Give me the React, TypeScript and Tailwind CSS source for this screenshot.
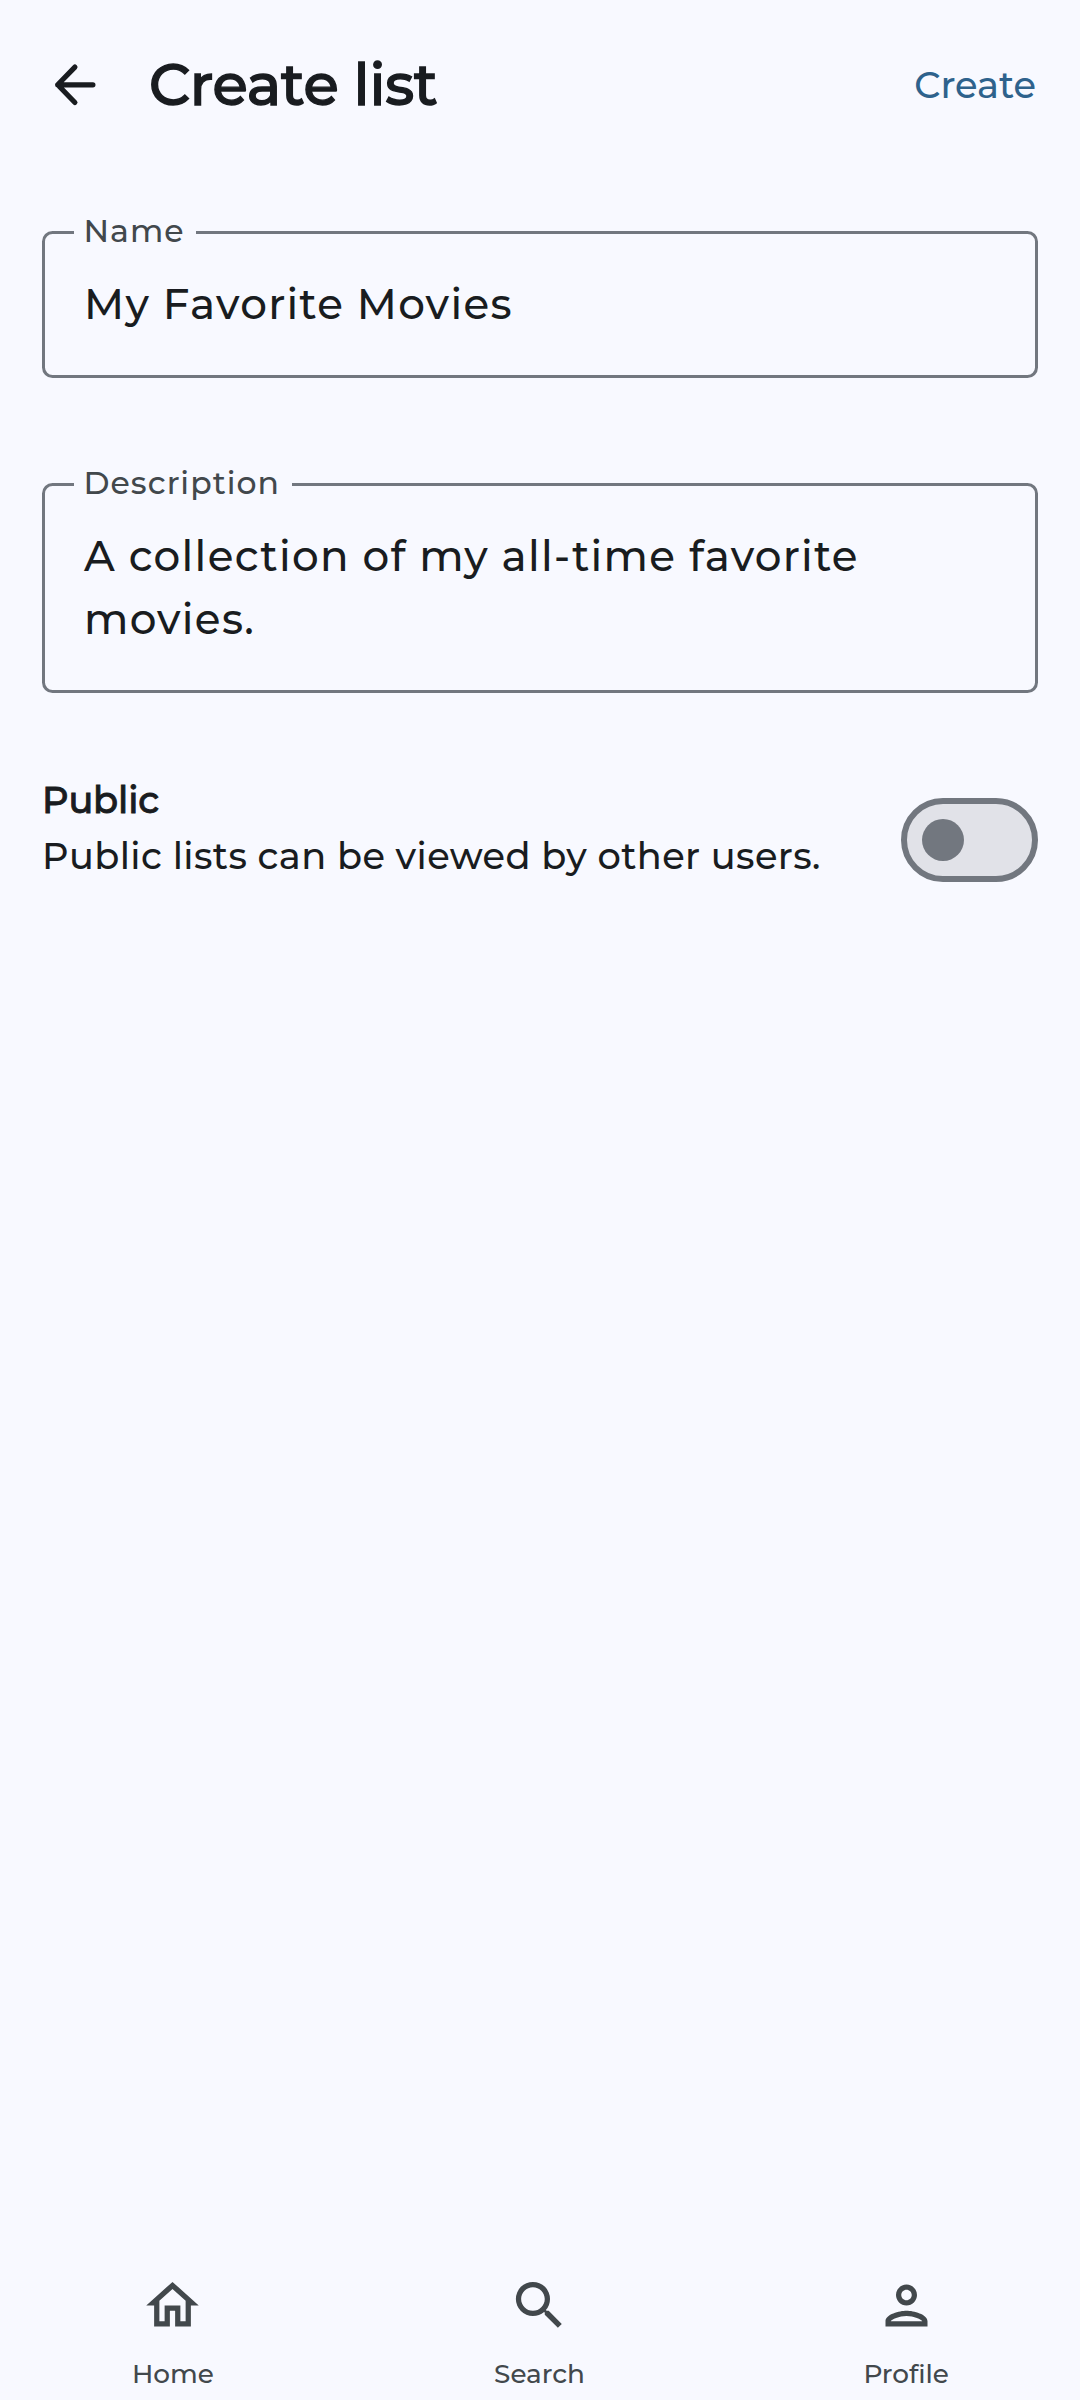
import type { ReactNode } from "react";

function Field({ label, children, height }: { label: string; children: ReactNode; height: string }) {
  return (
    <div className={`relative rounded-[10.5px] border-[3px] border-[#72777f] px-[39px] pt-[39px] ${height}`}>
      <span className="absolute -top-6 left-[29px] bg-[#f8f9ff] pr-[11.5px] pl-[9.5px] text-[31.5px] leading-[42px] tracking-[1.02px] text-[#42484c]">
        {label}
      </span>
      <p className="text-[42px] leading-[63px] tracking-[1.31px]">{children}</p>
    </div>
  );
}

function NavItem({ label, d }: { label: string; d: string }) {
  return (
    <div className="flex flex-col items-center">
      <svg viewBox="0 0 24 24" className="size-[63px]" fill="currentColor">
        <path d={d} />
      </svg>
      <span className="mt-[21px] text-[26.25px] leading-8">{label}</span>
    </div>
  );
}

const home = "M12 5.69l5 4.5V18h-2v-6H9v6H7v-7.81l5-4.5M12 3L2 12h3v8h6v-6h2v6h6v-8h3L12 3z";
const search =
  "M15.5 14h-.79l-.28-.27A6.471 6.471 0 0 0 16 9.5 6.5 6.5 0 1 0 9.5 16c1.61 0 3.09-.59 4.23-1.57l.27.28v.79l5 4.99L20.49 19l-4.99-5zm-6 0C7.01 14 5 11.99 5 9.5S7.01 5 9.5 5 14 7.01 14 9.5 11.99 14 9.5 14z";
const person =
  "M12 6c1.1 0 2 .9 2 2s-.9 2-2 2-2-.9-2-2 .9-2 2-2m0 10c2.7 0 5.8 1.29 6 2H6c.23-.72 3.31-2 6-2m0-12C9.79 4 8 5.79 8 8s1.79 4 4 4 4-1.79 4-4-1.79-4-4-4zm0 10c-2.67 0-8 1.34-8 4v2h16v-2c0-2.66-5.33-4-8-4z";

export default function App() {
  return (
    <div className="flex h-[2400px] w-[1080px] flex-col bg-[#f8f9ff] font-[Montserrat,Inter,sans-serif] font-medium text-[#191c20]">
      <header className="flex h-[168px] items-center pr-11 pl-11">
        <svg
          viewBox="0 0 63 63"
          className="size-[63px]"
          fill="none"
          stroke="currentColor"
          strokeWidth="5.2"
          strokeLinecap="round"
          strokeLinejoin="round"
        >
          <path d="M30.9 14.1 13.7 31.8 30.9 49.5M13.7 31.8h35.2" />
        </svg>
        <h1 className="ml-[42px] text-[57.75px] leading-[72px] tracking-[-0.33px] [-webkit-text-stroke:1.4px_currentColor]">
          Create list
        </h1>
        <button className="ml-auto pt-[2px] text-[36.75px] leading-[50px] text-[#2e628c]">Create</button>
      </header>
      <main className="flex flex-1 flex-col px-[42px] pt-[63px]">
        <div className="flex flex-col gap-[105px]">
          <Field label="Name" height="h-[147px]">
            My Favorite Movies
          </Field>
          <Field label="Description" height="h-[210px]">
            A collection of my all-time favorite movies.
          </Field>
        </div>
        <div className="mt-[79px] flex justify-between">
          <div className="text-[36.75px] leading-[56px]">
            <h2 className="tracking-[-0.15px] [-webkit-text-stroke:0.9px_currentColor]">Public</h2>
            <p className="tracking-[0.4px]">Public lists can be viewed by other users.</p>
          </div>
          <div
            role="switch"
            aria-checked="false"
            className="mt-[26px] flex h-[84px] w-[137px] items-center rounded-full border-[6px] border-[#72777f] bg-[#e1e2e8] pl-[15px]"
          >
            <span className="size-[42px] rounded-full bg-[#72777f]" />
          </div>
        </div>
      </main>
      <nav className="grid h-[126px] grid-cols-3 gap-[21px] pr-px text-[#42484c]">
        <NavItem label="Home" d={home} />
        <NavItem label="Search" d={search} />
        <NavItem label="Profile" d={person} />
      </nav>
    </div>
  );
}
